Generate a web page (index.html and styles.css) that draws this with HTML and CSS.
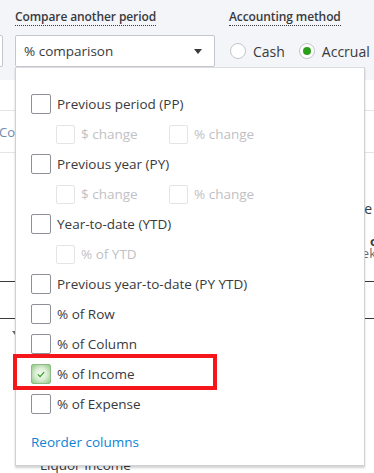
FILE: index.html
```html
<!DOCTYPE html>
<html>
<head>
<meta charset="utf-8">
<link rel="stylesheet" href="styles.css">
</head>
<body>
<div class="page">
  <div class="top">
    <div class="controls">
      <div class="stub"></div>
      <div class="group compare">
        <div class="label">Compare another period</div>
        <div class="select">
          <span>% comparison</span>
          <span class="caret"></span>
        </div>
      </div>
      <div class="group method">
        <div class="label">Accounting method</div>
        <div class="radios">
          <label class="radio"><span class="dot"></span>Cash</label>
          <label class="radio on"><span class="dot"></span>Accrual</label>
        </div>
      </div>
    </div>
  </div>
  <div class="report">
    <div class="tabs"><span class="tab">Co</span></div>
    <div class="title-row"><span>e</span></div>
    <div class="head-row"><b>o</b><span>ek</span></div>
    <div class="tline"></div>
    <div class="tline second"></div>
    <div class="caret-row"><span class="tri"></span></div>
  </div>
  <div class="liquor">Liquor Income</div>

  <div class="menu">
    <div class="item"><span class="cb"></span>Previous period (PP)</div>
    <div class="sub">
      <span class="subitem"><span class="cb dis"></span>$ change</span>
      <span class="subitem"><span class="cb dis"></span>% change</span>
    </div>
    <div class="item"><span class="cb"></span>Previous year (PY)</div>
    <div class="sub">
      <span class="subitem"><span class="cb dis"></span>$ change</span>
      <span class="subitem"><span class="cb dis"></span>% change</span>
    </div>
    <div class="item"><span class="cb"></span>Year-to-date (YTD)</div>
    <div class="sub">
      <span class="subitem"><span class="cb dis"></span>% of YTD</span>
    </div>
    <div class="item"><span class="cb"></span>Previous year-to-date (PY YTD)</div>
    <div class="item"><span class="cb"></span>% of Row</div>
    <div class="item"><span class="cb"></span>% of Column</div>
    <div class="item highlight"><span class="cb checked"><svg viewBox="0 0 20 20" width="20" height="20"><path d="M6.5 10.5 L9 13 L13.5 8" fill="none" stroke="#2ca01c" stroke-width="1.3"/></svg></span>% of Income</div>
    <div class="item"><span class="cb"></span>% of Expense</div>
    <div class="reorder">Reorder columns</div>
  </div>
</div>
</body>
</html>
```

FILE: styles.css
```css
*, *::before, *::after { box-sizing: border-box; }
html, body { margin: 0; padding: 0; }
body {
  font-family: "Open Sans", "Liberation Sans", sans-serif;
  color: #393a3d;
  background: #fff;
  width: 374px;
  height: 473px;
  overflow: hidden;
}
.page { position: relative; width: 374px; height: 473px; overflow: hidden; }

.top { background: #f4f5f8; height: 80px; }
.controls { display: flex; align-items: flex-start; padding-top: 8px; width: 600px; }
.stub {
  flex: none;
  width: 20px; height: 32px; margin-left: -17px; margin-top: 27px;
  background: #fff; border: 1px solid #c4c6cb; border-radius: 2px;
}
.group { display: flex; flex-direction: column; flex: none; }
.compare { margin-left: 12px; width: 200px; }
.method { margin-left: 14px; }
.label {
  font-size: 12px; font-weight: 600; color: #393a3d;
  line-height: 18px; height: 18px;
  align-self: flex-start;
  border-bottom: 1px dotted #393a3d;
  letter-spacing: -0.1px;
}
.select {
  margin-top: 9px; height: 32px; background: #fff;
  border: 1px solid #c4c6cb; border-radius: 2px;
  display: flex; align-items: center; justify-content: space-between;
  padding: 0 12px 0 8px; font-size: 13.5px;
}
.caret { width: 0; height: 0; border-left: 4.5px solid transparent; border-right: 4.5px solid transparent; border-top: 5px solid #393a3d; }
.radios { display: flex; margin-top: 9px; height: 32px; align-items: center; margin-left: 1px; }
.radio { display: flex; align-items: center; font-size: 14px; color: #393a3d; margin-right: 14px; }
.dot {
  width: 16px; height: 16px; border-radius: 50%; background: #fff;
  border: 1px solid #c4c6cb; margin-right: 7px; position: relative;
}
.radio.on .dot::after {
  content: ""; position: absolute; left: 3px; top: 3px; width: 8px; height: 8px;
  border-radius: 50%; background: #2ca01c;
}

.report { position: relative; padding-top: 30px; }
.tabs { border-top: 1px solid #e3e5e8; border-bottom: 1px solid #e3e5e8; height: 43px; display: flex; align-items: center; }
.tab { font-size: 13px; color: #6b8cb0; margin-left: -1px; }
.title-row { display: flex; justify-content: flex-end; margin-top: 46px; font-size: 14px; height: 18px; padding-right: 2px; }
.head-row { display: flex; flex-direction: column; align-items: flex-end; margin-top: 18px; font-size: 13px; line-height: 12px; }
.head-row b { margin-right: -4px; }
.head-row span { color: #6b6c72; margin-right: -2px; }
.tline { height: 1px; background: #393a3d; margin-top: 22px; }
.tline.second { margin-top: 36px; }
.caret-row { height: 14px; padding-left: 12px; padding-top: 12px; }
.tri { display: block; width: 0; height: 0; border-left: 3px solid transparent; border-right: 3px solid transparent; border-top: 4px solid #6b6c72; }
.liquor { position: absolute; left: 40px; top: 456px; font-size: 13.5px; color: #393a3d; }

.menu {
  position: absolute; left: 15px; top: 67px; width: 350px; height: 399px;
  background: #fff; border: 1px solid #cfd1d5; border-top-color: #dcdde0;
  box-shadow: 0 2px 2px rgba(0,0,0,0.18);
  padding: 21px 0 0 15px;
  display: flex; flex-direction: column;
}
.item, .sub { height: 30px; display: flex; align-items: center; font-size: 13.5px; color: #393a3d; }
.item { position: relative; }
.sub { padding-left: 25px; color: #bfc1c5; }
.subitem { display: flex; align-items: center; width: 113px; }
.cb {
  width: 20px; height: 20px; border: 1px solid #8d9096; border-radius: 2px;
  background: #fff; margin-right: 6px; flex: none;
  display: flex; align-items: center; justify-content: center;
}
.cb.dis { border-color: #e3e4e6; width: 19px; height: 19px; }
.cb.checked {
  border-color: #8dbb83;
  background: radial-gradient(circle at 50% 50%, #f4fbf2 0%, #dcefd6 45%, #90c785 100%);
}
.cb.checked svg { display: block; }
.highlight::before {
  content: ""; position: absolute; left: -18px; top: -5px; width: 204px; height: 36px;
  border: 4px solid #f4161b; pointer-events: none;
}
.reorder { margin-top: 14px; font-size: 13.5px; color: #0d84d4; }
```
